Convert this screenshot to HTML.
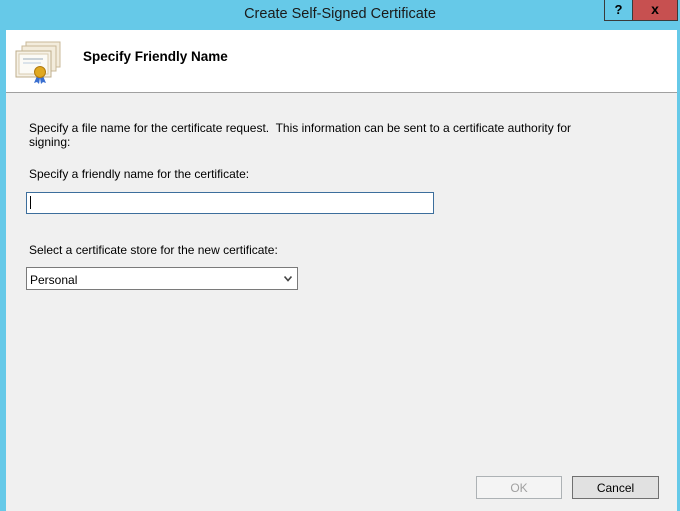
<!DOCTYPE html>
<html><head><meta charset="utf-8"><style>
*{margin:0;padding:0;box-sizing:border-box}
body{width:680px;height:511px;background:#66c9e8;position:relative;overflow:hidden;font-family:"Liberation Sans",sans-serif;font-size:12px;color:#000}
.abs{position:absolute}
.title{left:0;width:680px;top:6px;text-align:center;font-size:14.5px;color:#1a1a1a}
.help{left:604px;top:0;width:29px;height:21px;border:1px solid #3a3a3a;border-top:none;background:#66c9e8;text-align:center;font-weight:bold;font-size:13px;line-height:19px}
.close{left:632px;top:0;width:46px;height:21px;border:1px solid #3a3a3a;border-top:none;background:#c75050;text-align:center;font-weight:bold;font-size:14px;line-height:19px}
.head{left:6px;top:30px;width:671px;height:63px;background:#fff;border-bottom:1px solid #a0a0a0}
.body{left:6px;top:93px;width:671px;height:418px;background:#f0f0f0}
.h1{left:83px;top:49px;font-weight:bold;font-size:13.5px}
.t{left:29px}
.input{left:26px;top:192px;width:408px;height:22px;background:#fff;border:1px solid #3c6e9c}
.caret{left:30px;top:196px;width:1px;height:13px;background:#000}
.combo{left:26px;top:267px;width:272px;height:23px;background:#fff;border:1px solid #7a7a7a}
.btn{top:476px;height:23px;text-align:center;line-height:23px;font-size:12px}
</style></head><body>
<div class="abs title">Create Self-Signed Certificate</div>
<div class="abs help">?</div>
<div class="abs close">x</div>
<div class="abs head"></div>
<svg class="abs" style="left:13px;top:40px" width="50" height="45" viewBox="0 0 50 45">
<rect x="13" y="2" width="34" height="25" fill="#f3ecdc" stroke="#c8b898"/>
<rect x="9" y="6" width="34" height="25" fill="#f3ecdc" stroke="#c8b898"/>
<rect x="3" y="11" width="35" height="26" fill="#f6f1e6" stroke="#bfae8c"/>
<rect x="6" y="14" width="29" height="20" fill="#fbfaf6" stroke="#d8ccb0"/>
<line x1="10" y1="19" x2="30" y2="19" stroke="#9ab" />
<line x1="10" y1="23" x2="28" y2="23" stroke="#bcd"/>
<path d="M24 36 l-3 7 l3 -1 l2 2 l1-6z M30 36 l3 7 l-3 -1 l-2 2 l-1-6z" fill="#3a6fd0"/>
<circle cx="27" cy="32" r="5.5" fill="#e0a820" stroke="#b07a10"/>
</svg>
<div class="abs h1">Specify Friendly Name</div>
<div class="abs body"></div>
<div class="abs t" style="top:121px">Specify a file name for the certificate request.&nbsp; This information can be sent to a certificate authority for</div>
<div class="abs t" style="top:135px">signing:</div>
<div class="abs t" style="top:167px">Specify a friendly name for the certificate:</div>
<div class="abs input"></div>
<div class="abs caret"></div>
<div class="abs t" style="top:243px">Select a certificate store for the new certificate:</div>
<div class="abs combo"><span style="position:absolute;left:3px;top:5px">Personal</span>
<svg style="position:absolute;right:5px;top:8px" width="8" height="6" viewBox="0 0 8 6"><path d="M0.5 0.5 L4 4.5 L7.5 0.5" fill="none" stroke="#444" stroke-width="1.6"/></svg></div>
<div class="abs btn" style="left:476px;width:86px;background:#f4f4f4;border:1px solid #adb2b5;color:#a0a0a0">OK</div>
<div class="abs btn" style="left:572px;width:87px;background:#e1e1e1;border:1px solid #707070">Cancel</div>
</body></html>
